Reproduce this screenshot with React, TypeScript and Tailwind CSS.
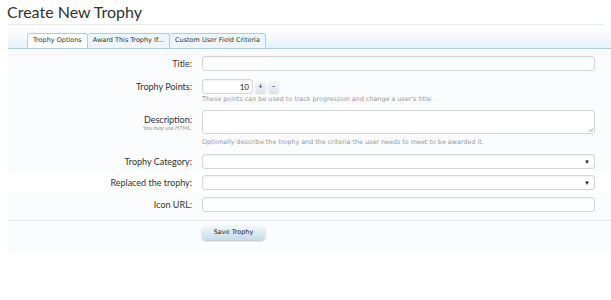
import React from "react";

const field =
  "h-[15px] rounded-[3px] border border-[#d6d6d6] bg-white shadow-[inset_0_1px_2px_rgba(0,0,0,0.06)]";

const hint = "font-['DejaVu_Sans',sans-serif] text-[6.4px] leading-[9px] text-[#999]";

function Row({
  label,
  sub,
  children,
  className = "",
  labelTop = "0px",
}: {
  label: string;
  sub?: string;
  children: React.ReactNode;
  className?: string;
  labelTop?: string;
}) {
  return (
    <div className={`flex items-start ${className}`}>
      <div className="w-[184px] shrink-0 text-right" style={{ paddingTop: labelTop }}>
        <div className="flex h-[15px] items-center justify-end text-[9px] text-[#333]">{label}</div>
        {sub && <div className="-mt-[3px] text-[6px] italic leading-[8px] text-[#999]">{sub}</div>}
      </div>
      <div className="ml-[10px] w-[393px]">{children}</div>
    </div>
  );
}

function SelectBox() {
  return (
    <div className={`${field} flex items-center justify-end pr-[4px]`}>
      <span className="text-[6px] leading-none text-[#222]">▼</span>
    </div>
  );
}

function Spin({ sign }: { sign: string }) {
  return (
    <div className="flex h-[12px] w-[11px] items-center justify-center rounded-[3px] bg-gradient-to-b from-[#f4f7fa] to-[#dde5ee] text-[7px] font-bold text-[#333] shadow-[0_1px_1px_rgba(0,0,0,0.15)]">
      {sign}
    </div>
  );
}

export default function App() {
  return (
    <div className="h-[300px] w-[611px] overflow-hidden bg-white font-['Lato',sans-serif]">
      <h1 className="px-[7px] pt-[1px] text-[16px] leading-[22px] text-[#333]">Create New Trophy</h1>
      <div className="mx-[8px] mt-[1px] border-t border-[#e6ebf0]" />

      <div className="ml-[8px] mt-[2px] bg-[#fbfcfd]">
        <div className="flex h-[22px] items-end border-b border-[#a9d0ea] bg-gradient-to-b from-white to-[#e7f2fa] pl-[19px] font-['DejaVu_Sans',sans-serif] text-[6.5px] text-[#333]">
          <div className="flex h-[15px] items-center rounded-t-[3px] border border-b-0 border-[#a9d0ea] bg-white px-[5px]">
            Trophy Options
          </div>
          <div className="flex h-[15px] items-center rounded-t-[3px] border border-b-0 border-l-0 border-[#a9d0ea] bg-[#eef6fc] px-[5px]">
            Award This Trophy If...
          </div>
          <div className="flex h-[15px] items-center rounded-t-[3px] border border-b-0 border-l-0 border-[#a9d0ea] bg-[#eef6fc] px-[5px]">
            Custom User Field Criteria
          </div>
        </div>

        <div className="pt-[7px]">
          <Row label="Title:">
            <div className={field} />
          </Row>

          <Row label="Trophy Points:" className="mt-[8px]">
            <div className="flex items-center gap-[2px]">
              <div className={`${field} flex w-[51px] items-center justify-end pr-[3px] text-[8px] text-[#222]`}>10</div>
              <Spin sign="+" />
              <Spin sign="-" />
            </div>
            <p className={`mt-[1px] ${hint}`}>
              These points can be used to track progression and change a user's title.
            </p>
          </Row>

          <Row label="Description:" sub="You may use HTML." labelTop="2px" className="mt-[6px]">
            <div className="relative h-[24px] rounded-[3px] border border-[#d6d6d6] bg-white">
              <svg className="absolute bottom-[1px] right-[1px]" width="5" height="5" viewBox="0 0 5 5">
                <path d="M5 1 L1 5 M5 3 L3 5" stroke="#999" strokeWidth="0.7" />
              </svg>
            </div>
            <p className={`mt-[4px] ${hint}`}>
              Optionally describe the trophy and the criteria the user needs to meet to be awarded it.
            </p>
          </Row>

          <Row label="Trophy Category:" className="mt-[7px]">
            <SelectBox />
          </Row>

          <Row label="Replaced the trophy:" className="-ml-[8px] mt-[3px] bg-white py-[3px] pl-[8px]">
            <SelectBox />
          </Row>

          <Row label="Icon URL:" className="mt-[4px]">
            <div className={field} />
          </Row>

          <div className="mt-[8px] border-t border-[#e3e9ef]" />

          <div className="flex pb-[12px] pl-[194px] pt-[5px]">
            <button className="h-[14px] w-[63px] rounded-[4px] bg-gradient-to-b from-[#f2f7fb] to-[#c5dcec] font-['DejaVu_Sans',sans-serif] text-[6.5px] text-[#222] shadow-[0_1px_2px_rgba(0,0,0,0.25)]">
              Save Trophy
            </button>
          </div>
        </div>
      </div>
    </div>
  );
}
